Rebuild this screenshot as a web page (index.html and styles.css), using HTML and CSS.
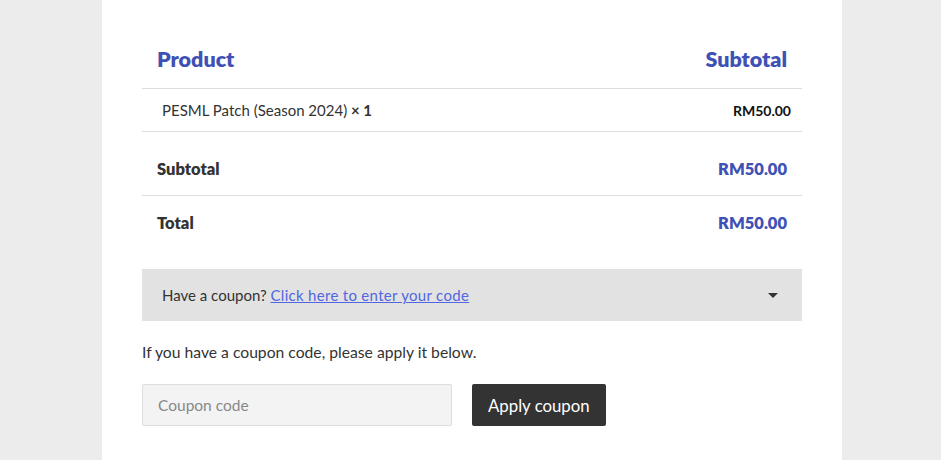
FILE: index.html
```html
<!DOCTYPE html>
<html lang="en">
<head>
    <meta charset="UTF-8">
    <meta name="viewport" content="width=device-width, initial-scale=1.0">
    <title>Checkout</title>
    <link rel="stylesheet" href="styles.css">
</head>
<body>
    <div class="page">
        <table class="order-table">
            <thead>
                <tr>
                    <th class="col-name">Product</th>
                    <th class="col-total">Subtotal</th>
                </tr>
            </thead>
            <tbody>
                <tr class="item-row">
                    <td class="col-name">PESML Patch (Season 2024) <strong>&times;&nbsp;1</strong></td>
                    <td class="col-total"><strong>RM50.00</strong></td>
                </tr>
            </tbody>
            <tfoot>
                <tr class="sum-row">
                    <th class="col-name">Subtotal</th>
                    <td class="col-total price">RM50.00</td>
                </tr>
                <tr class="sum-row">
                    <th class="col-name">Total</th>
                    <td class="col-total price">RM50.00</td>
                </tr>
            </tfoot>
        </table>

        <div class="coupon-toggle">
            <span>Have a coupon? <a href="#">Click here to enter your code</a></span>
            <span class="caret"></span>
        </div>

        <p class="coupon-note">If you have a coupon code, please apply it below.</p>

        <form class="coupon-form">
            <input type="text" class="coupon-input" placeholder="Coupon code">
            <button type="button" class="coupon-btn">Apply coupon</button>
        </form>
    </div>
</body>
</html>
```

FILE: styles.css
```css
body {
    margin: 0;
    background-color: #ececec;
    font-family: Lato, "Noto Sans", sans-serif;
    color: #333;
}
.page {
    width: 660px;
    margin: 0 0 0 102px;
    padding: 32px 40px 40px;
    background-color: #fff;
}
.order-table {
    width: 100%;
    border-collapse: collapse;
}
.order-table th,
.order-table td {
    text-align: left;
}
.order-table .col-total {
    text-align: right;
}
thead th {
    padding: 14px 15px 16px;
    font-size: 21.5px;
    font-weight: 800;
    color: #3f51b5;
    border-bottom: 1px solid #ddd;
}
.item-row td {
    padding: 12px 20px 12px 20px;
    font-size: 15px;
    border-bottom: 1px solid #ddd;
}
.item-row .col-total {
    padding-right: 11px;
    font-size: 14px;
    color: #111;
}
.sum-row th,
.sum-row td {
    padding: 27px 15px 16px;
    font-size: 16.5px;
    font-weight: 800;
}
.sum-row + .sum-row th,
.sum-row + .sum-row td {
    border-top: 1px solid #ddd;
    padding-top: 17px;
    padding-bottom: 16px;
}
.price {
    color: #3f51b5;
}
.coupon-toggle {
    display: flex;
    justify-content: space-between;
    align-items: center;
    margin-top: 20px;
    height: 52px;
    padding: 0 24px 0 20px;
    background-color: #e2e2e2;
    font-size: 15px;
}
.coupon-toggle a {
    color: #5166e0;
    letter-spacing: 0.3px;
}
.caret {
    width: 0;
    height: 0;
    border-left: 5px solid transparent;
    border-right: 5px solid transparent;
    border-top: 5px solid #333;
}
.coupon-note {
    margin: 22px 0 23px;
    font-size: 15.7px;
}
.coupon-form {
    display: flex;
    gap: 20px;
}
.coupon-input {
    box-sizing: border-box;
    width: 310px;
    height: 42px;
    padding: 0 15px;
    background-color: #f3f3f3;
    border: 1px solid #ddd;
    border-radius: 2px;
    font-family: inherit;
    font-size: 15.5px;
    color: #333;
}
.coupon-input::placeholder {
    color: #888;
}
.coupon-btn {
    height: 42px;
    padding: 0 16px;
    background-color: #333;
    color: #fff;
    border: none;
    border-radius: 2px;
    font-family: inherit;
    font-size: 16.8px;
}
```
